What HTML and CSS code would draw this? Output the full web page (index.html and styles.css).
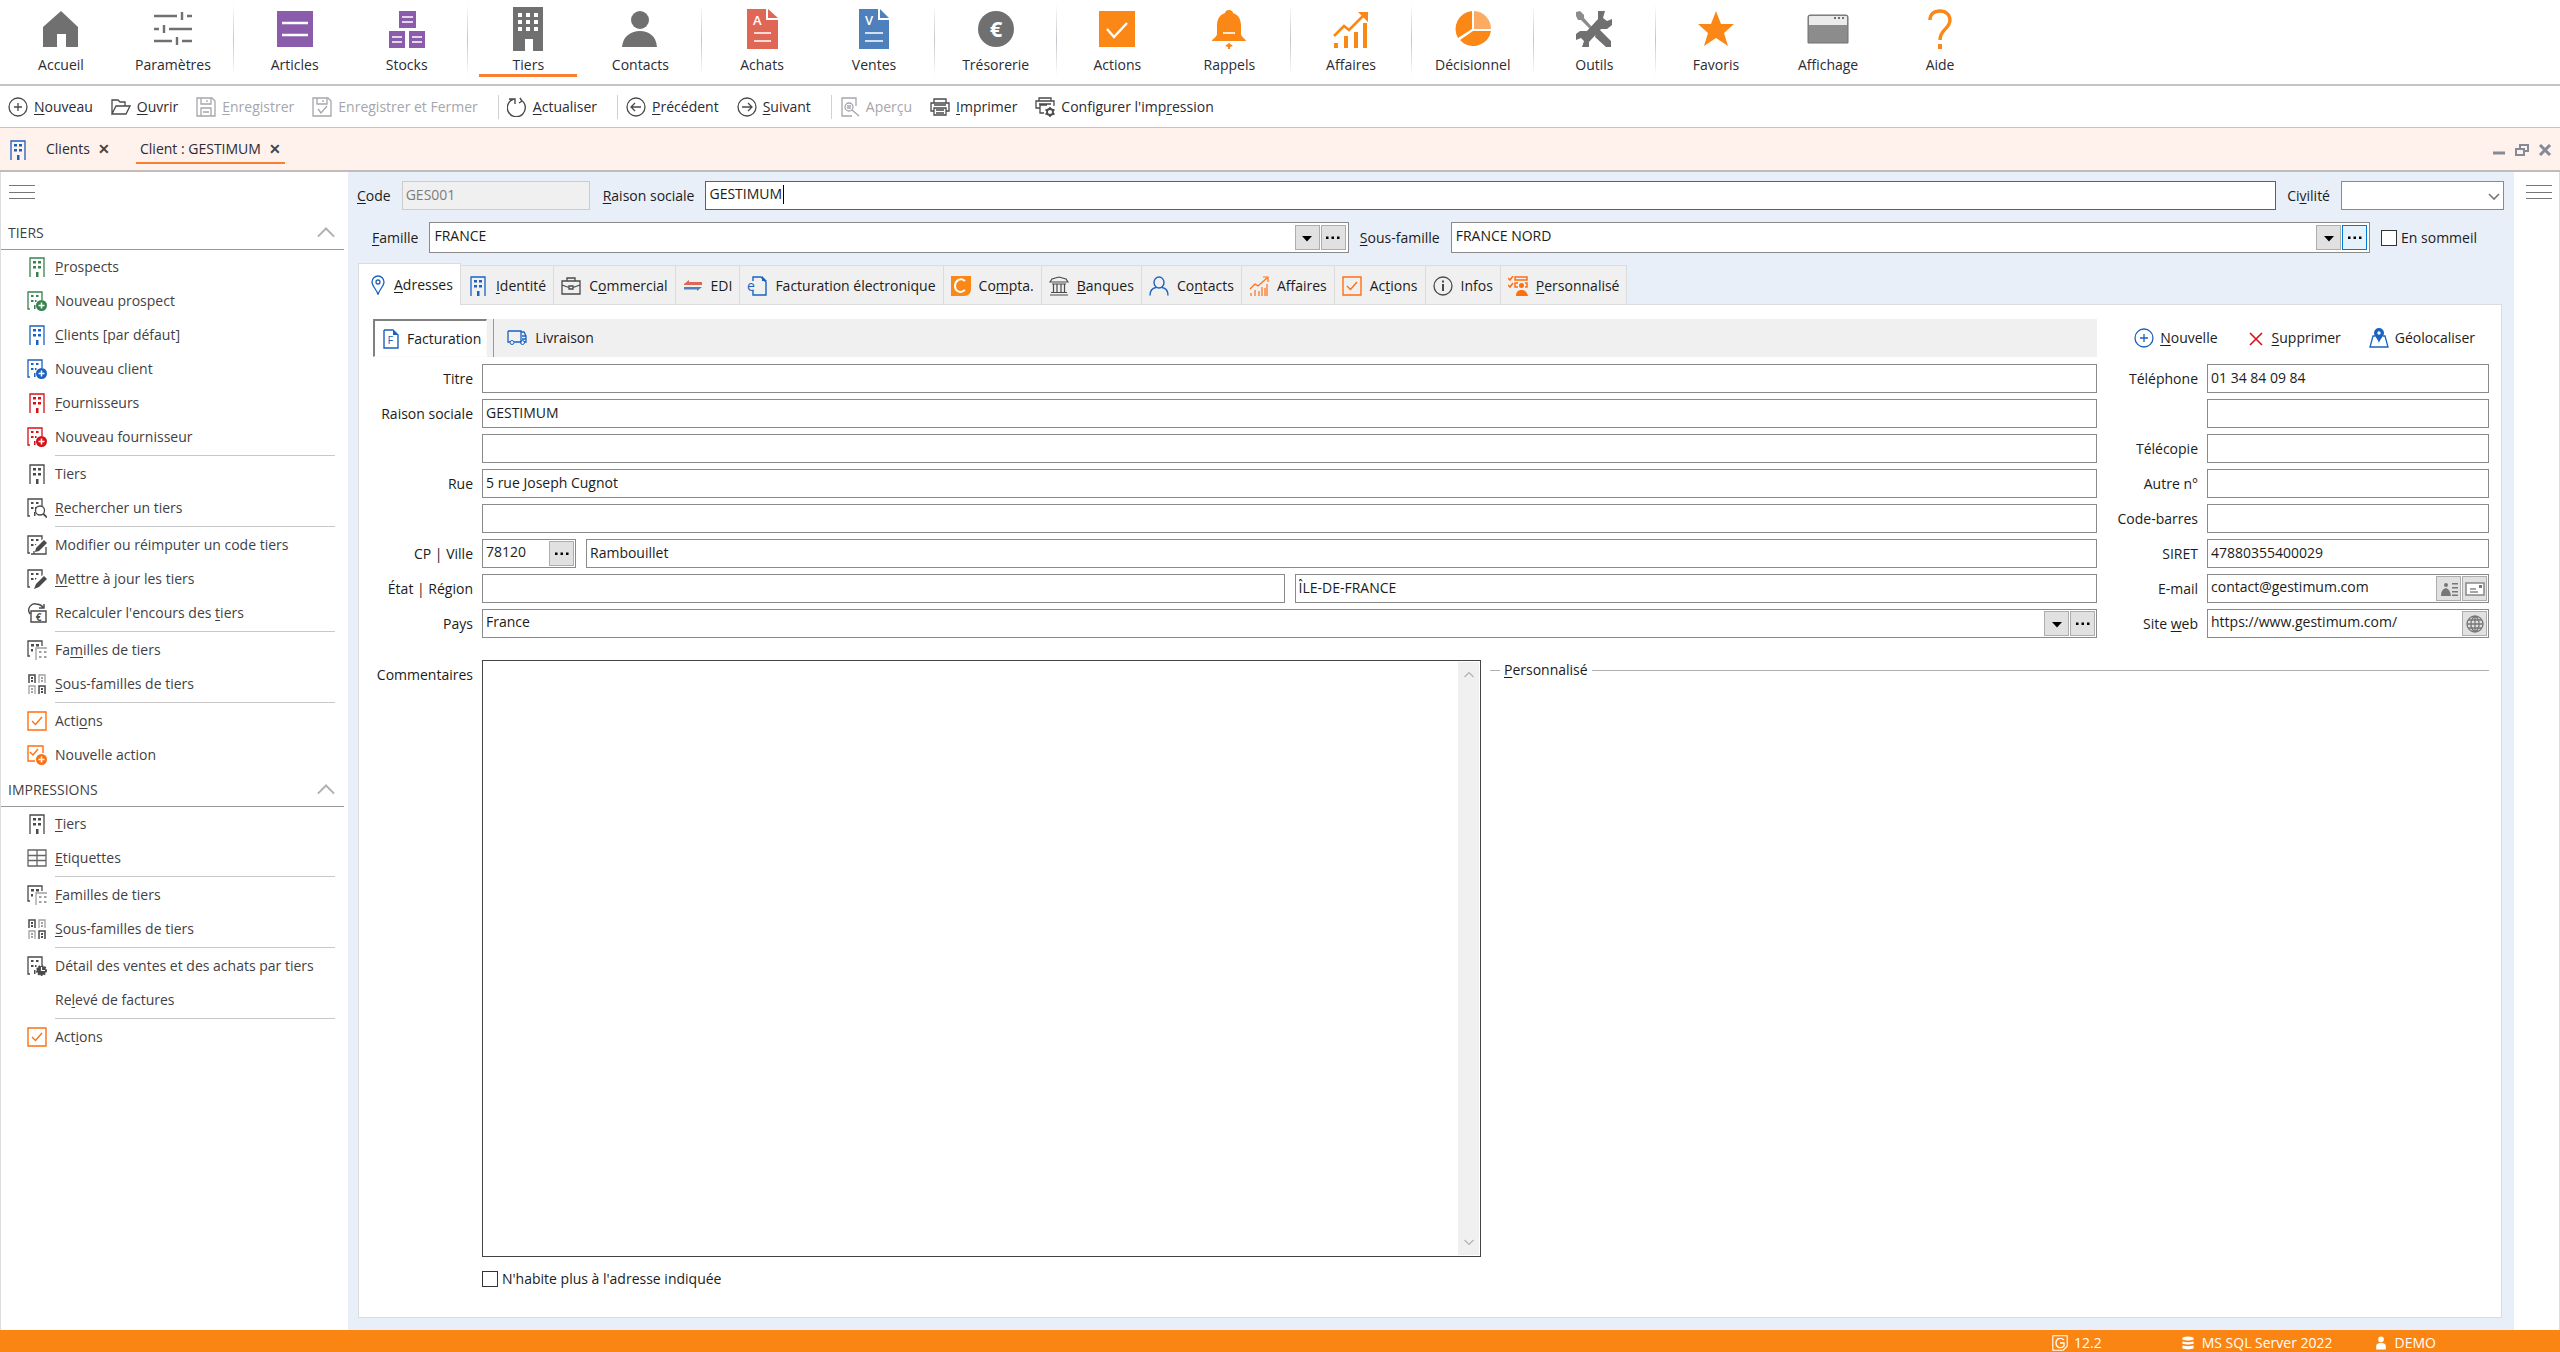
FILE: index.html
```html
<!DOCTYPE html>
<html lang="fr">
<head>
<meta charset="utf-8">
<meta name="viewport" content="width=device-width, initial-scale=1">
<title>Gestimum ERP - Client : GESTIMUM</title>
<link rel="stylesheet" href="styles.css">
</head>
<body>
<svg class="sprite" aria-hidden="true">
  <!-- Ruban principal, grille 44 -->
  <symbol id="n-home" viewBox="0 0 44 44"><path fill="#707070" d="M22 4 39 20V40H27V27H18V40H4V20Z"/></symbol>
  <symbol id="n-param" viewBox="0 0 44 44"><path fill="none" stroke="#707070" stroke-width="2.4" d="M3 9H26M36 9H41M31 5V13M3 22H8M18 22H41M13 18V26M3 34H21M31 34H41M26 30V38"/></symbol>
  <symbol id="n-articles" viewBox="0 0 44 44"><path fill="#8b5bac" d="M4 4H40V40H4Z"/><path stroke="#fff" stroke-width="2.6" d="M9 16H35M9 28H35"/></symbol>
  <symbol id="n-stocks" viewBox="0 0 44 44"><path fill="#8b5bac" d="M14 4H31V21H14ZM4 24H20V41H4ZM24 24H40V41H24Z"/><path stroke="#fff" stroke-width="1.6" d="M17 10H28M17 15H28M7 30H17M7 35H17M27 30H37M27 35H37"/></symbol>
  <symbol id="n-tiers" viewBox="0 0 44 44"><path fill="#707070" d="M7 0H37V44H27V32H19V44H7Z"/><path fill="#fff" d="M12 6h4v4h-4ZM20 6h4v4h-4ZM28 6h4v4h-4ZM12 13h4v4h-4ZM20 13h4v4h-4ZM28 13h4v4h-4ZM12 20h4v4h-4ZM20 20h4v4h-4ZM28 20h4v4h-4Z"/></symbol>
  <symbol id="n-contacts" viewBox="0 0 44 44"><circle cx="22" cy="13" r="9" fill="#707070"/><path fill="#707070" d="M4 40C5 29 13 24 22 24S38 29 39 40Z"/></symbol>
  <symbol id="n-achats" viewBox="0 0 44 44"><path fill="#e06655" d="M7 2H26V13H38V42H7ZM28 2 38 11H28Z"/><path stroke="#fff" stroke-width="1.5" d="M14 26H31M14 34H31"/><text x="13" y="18" fill="#fff" font-size="13" font-weight="600">A</text></symbol>
  <symbol id="n-ventes" viewBox="0 0 44 44"><path fill="#4e80bd" d="M7 2H26V13H37V42H7ZM28 2 37 11H28Z"/><path stroke="#fff" stroke-width="1.5" d="M13 26H31M13 34H31"/><text x="13" y="18" fill="#fff" font-size="13" font-weight="600">V</text></symbol>
  <symbol id="n-euro" viewBox="0 0 44 44"><circle cx="22" cy="22" r="18" fill="#707070"/><text x="22" y="30" text-anchor="middle" fill="#fff" font-size="22" font-weight="700">€</text></symbol>
  <symbol id="n-actions" viewBox="0 0 44 44"><path fill="#fb8716" d="M4 4H40V40H4Z"/><path fill="none" stroke="#fff" stroke-width="2.4" d="M12 22 19 30 32 16"/></symbol>
  <symbol id="n-bell" viewBox="0 0 44 44"><path fill="#fb8716" d="M22 3C25 3 26 5 26 6 32 8 34 13 34 19V27C34 30 39 32 39 34H5C5 32 10 30 10 27V19C10 13 12 8 18 6 18 5 19 3 22 3ZM22 36 26 39 23 40V42H21V40L18 39Z"/><path stroke="#fff" stroke-width="1.6" d="M16 26H28"/></symbol>
  <symbol id="n-affaires" viewBox="0 0 44 44"><path fill="#fb8716" d="M5 36h4v5H5ZM15 29h4v12h-4ZM25 25h4v16h-4ZM34 16h4v25h-4ZM29 5H39V15Z"/><path fill="none" stroke="#fb8716" stroke-width="2.6" d="M5 29 15 19 20 23 35 8"/></symbol>
  <symbol id="n-pie" viewBox="0 0 44 44"><path fill="#fbac62" d="M23 4A18 18 0 0 1 40 22H23Z"/><path fill="#fb8716" d="M21 4V22L7 31A18 18 0 0 1 21 4ZM40 24A18 18 0 0 1 9 33L22 24Z"/></symbol>
  <symbol id="n-outils" viewBox="0 0 44 44"><path fill="#8c8c8c" d="M4 5 8 4 12 8V11L20 20 18 22 9 13H6L4 9Z"/><path fill="#707070" d="M24 26 28 23 39 34V40H34L23 30ZM26 4H33L31 11 35 14 40 12V18L35 22H29L17 35V40H10L12 34 9 31 4 33V27L8 24H15L26 12Z"/></symbol>
  <symbol id="n-star" viewBox="0 0 44 44"><path fill="#fb8716" d="M22 4 27 17H40L30 26 34 39 22 31 10 39 14 26 4 17H17Z"/></symbol>
  <symbol id="n-window" viewBox="0 0 44 44"><path fill="#8c8c8c" stroke="#707070" d="M2 36V10Q2 8 4 8H40Q42 8 42 10V36Z"/><path fill="#ebebeb" d="M3 10Q3 9 4 9H40Q41 9 41 10V18H3Z"/><path fill="#707070" d="M28 10h2v2h-2ZM32 10h2v2h-2ZM36 10h2v2h-2Z"/></symbol>
  <symbol id="n-help" viewBox="0 0 44 44"><path fill="none" stroke="#fb8716" stroke-width="3.4" d="M12 13C12 7 16 4 22 4S32 8 32 13C32 22 22 22 22 33"/><path fill="#fb8716" d="M20 37h4v5h-4Z"/></symbol>

  <!-- Petites icônes, grille 20 -->
  <symbol id="i-plus" viewBox="0 0 20 20"><path fill="none" stroke="currentColor" stroke-width="1.3" d="M10 1A9 9 0 1 1 10 19 9 9 0 1 1 10 1M10 6V14M6 10H14"/></symbol>
  <symbol id="i-prev" viewBox="0 0 20 20"><path fill="none" stroke="currentColor" stroke-width="1.3" d="M10 1A9 9 0 1 1 10 19 9 9 0 1 1 10 1M5 10H15M9 6 5 10 9 14"/></symbol>
  <symbol id="i-next" viewBox="0 0 20 20"><path fill="none" stroke="currentColor" stroke-width="1.3" d="M10 1A9 9 0 1 1 10 19 9 9 0 1 1 10 1M5 10H15M11 6 15 10 11 14"/></symbol>
  <symbol id="i-open" viewBox="0 0 20 20"><path fill="none" stroke="currentColor" stroke-width="1.3" d="M1 17V3H7L9 5H14V9M1 17 5 9H19L15 17Z"/></symbol>
  <symbol id="i-save" viewBox="0 0 20 20"><path fill="none" stroke="currentColor" stroke-width="1.3" d="M1 1H16L19 4V19H1ZM5 1V7H15V1M11 3V5M5 19V11H15V19M7 15H13"/></symbol>
  <symbol id="i-saveclose" viewBox="0 0 20 20"><path fill="none" stroke="currentColor" stroke-width="1.3" d="M1 1H16L19 4V19H1ZM5 1V7H15V1M11 3V5M6 12 9 16 15 9"/></symbol>
  <symbol id="i-refresh" viewBox="0 0 20 20"><path fill="none" stroke="currentColor" stroke-width="1.4" d="M7 2A9 9 0 1 0 14 3M2 2H8V7M13 1 15 4 12 6"/></symbol>
  <symbol id="i-preview" viewBox="0 0 20 20"><path fill="none" stroke="currentColor" stroke-width="1.3" d="M12 19H2V1H16V9M9 6A4 4 0 1 1 9 14 4 4 0 1 1 9 6M12 13 19 19M7 9H11M7 11H11"/></symbol>
  <symbol id="i-print" viewBox="0 0 20 20"><path fill="none" stroke="currentColor" stroke-width="1.3" d="M4 6V2H16V6M4 14H1V6H19V14H16M4 11H16V18H4ZM6 13H14M6 16H14M4 8H16"/></symbol>
  <symbol id="i-printcfg" viewBox="0 0 20 20"><path fill="none" stroke="currentColor" stroke-width="1.3" d="M4 4V1H16V4M5 11H1V4H19V9M4 7H16M9 16H5V8H12"/><circle cx="15" cy="15" r="3" fill="none" stroke="currentColor" stroke-width="1.8"/><path stroke="currentColor" stroke-width="1.6" d="M15 10V12M15 18V20M10.5 12.5 12 13.5M18 16.5 19.5 17.5M10.5 17.5 12 16.5M18 13.5 19.5 12.5"/></symbol>
  <symbol id="i-bld" viewBox="0 0 20 20"><path fill="none" stroke="currentColor" stroke-width="1.3" d="M3 20V1H17V20"/><path fill="currentColor" d="M6 4h3v2.5H6ZM11 4h3v2.5h-3ZM6 9h3v2.5H6ZM11 9h3v2.5h-3ZM9 15h2.5v5H9Z"/></symbol>
  <symbol id="i-bldpart" viewBox="0 0 20 20"><path fill="none" stroke="currentColor" stroke-width="1.3" d="M3 18H1V1H15V9"/><path fill="currentColor" d="M4 4h2.5v2H4ZM9 4h2.5v2H9ZM4 9h2.5v2H4ZM8 9h1.5v2H8ZM7 14h1.5v4H7Z"/></symbol>
  <symbol id="i-bldplus" viewBox="0 0 20 20"><use href="#i-bldpart"/><circle cx="14.5" cy="14.5" r="5.5" fill="currentColor"/><path stroke="#fff" stroke-width="1.5" d="M14.5 11.5V17.5M11.5 14.5H17.5"/></symbol>
  <symbol id="i-bldfind" viewBox="0 0 20 20"><use href="#i-bldpart"/><circle cx="13" cy="12.5" r="4.5" fill="#fff" stroke="currentColor" stroke-width="1.3"/><path stroke="currentColor" stroke-width="1.8" d="M16 15.5 20 19.5"/></symbol>
  <symbol id="i-bldedit" viewBox="0 0 20 20"><use href="#i-bldpart"/><path fill="#fff" d="M6 12 16 4H20V20H5Z"/><path fill="none" stroke="currentColor" stroke-width="1.3" d="M7 16V19H19V12M4 19H7"/><path fill="currentColor" d="M8 17 9 13 17 5 20 8 12 16Z"/></symbol>
  <symbol id="i-bldpen" viewBox="0 0 20 20"><use href="#i-bldpart"/><path fill="#fff" d="M6 12 16 6H20V20H7Z"/><path fill="currentColor" d="M7 20 9 15 17 7 20 10 12 18Z"/></symbol>
  <symbol id="i-recalc" viewBox="0 0 20 20"><path fill="none" stroke="currentColor" stroke-width="1.4" d="M4 8V19H19V8ZM3 11C-1 5 5 0 9 1 12 1 14 2 16 4M17 1V5H12"/><text x="11.5" y="17.5" text-anchor="middle" font-size="10" font-weight="700" fill="currentColor">€</text></symbol>
  <symbol id="i-fam" viewBox="0 0 20 20"><path fill="none" stroke="currentColor" stroke-width="1.3" d="M3 16H1V1H15V6"/><path fill="currentColor" d="M4 4h3v2.5H4ZM9 4h3v2.5H9ZM4 9h2v2.5H4Z"/><path fill="none" stroke="#a0a0a0" stroke-width="1.3" d="M9 20V8H20"/><path fill="#a0a0a0" d="M12 11h2.5v2H12ZM17 11h2.5v2H17ZM12 16h2.5v2H12ZM17 16h2.5v2H17Z"/></symbol>
  <symbol id="i-sfam" viewBox="0 0 20 20"><path fill="none" stroke="currentColor" stroke-width="1.5" d="M2 9V1H8V9M12 20V12H18V20"/><path fill="currentColor" d="M4 3h2v2H4ZM4 6h2v2H4ZM14 14h2v2h-2ZM14 17h2v2h-2Z"/><path fill="none" stroke="#a0a0a0" stroke-width="1.3" d="M12 9V1H18V9M2 20V12H8V20"/><path fill="#a0a0a0" d="M14 3h2v2h-2ZM14 6h2v2h-2ZM4 14h2v2H4ZM4 17h2v2H4Z"/></symbol>
  <symbol id="i-check" viewBox="0 0 20 20"><path fill="none" stroke="currentColor" stroke-width="1.4" d="M1 1H19V19H1ZM5 10 8.5 13.5 15 6"/></symbol>
  <symbol id="i-checkplus" viewBox="0 0 20 20"><path fill="none" stroke="currentColor" stroke-width="1.4" d="M8 16H1V1H16V8M3 7 6 10 11 4"/><circle cx="14.5" cy="14.5" r="5.5" fill="currentColor"/><path stroke="#fff" stroke-width="1.5" d="M14.5 11.5V17.5M11.5 14.5H17.5"/></symbol>
  <symbol id="i-grid" viewBox="0 0 20 20"><path fill="none" stroke="#666" stroke-width="1.3" d="M1 2H19V18H1ZM10 2V18M1 7.5H19M1 12.5H19"/></symbol>
  <symbol id="i-bldclock" viewBox="0 0 20 20"><use href="#i-bldpart"/><circle cx="14.5" cy="14.5" r="4.6" fill="currentColor" stroke="currentColor" stroke-width="1.8" stroke-dasharray="1.8 1.2"/><path fill="none" stroke="#fff" stroke-width="1.2" d="M14.5 11V14.5H18"/></symbol>
  <symbol id="i-pin" viewBox="0 0 20 20"><path fill="none" stroke="currentColor" stroke-width="1.3" d="M10 19.5C9 15 4 11 4 7A6 6 0 0 1 16 7C16 11 11 15 10 19.5Z"/><circle cx="10" cy="7" r="2" fill="none" stroke="currentColor" stroke-width="1.3"/></symbol>
  <symbol id="i-case" viewBox="0 0 20 20"><path fill="none" stroke="currentColor" stroke-width="1.3" d="M1 5H19V18H1ZM6 5V2H14V5M1 9 8 11.500M12 11.500 19 9M8 10H12V13H8Z"/></symbol>
  <symbol id="i-edi" viewBox="0 0 20 20"><path fill="#e06655" d="M1 8 6 4V6H19V9H1Z"/><path fill="#4e80bd" d="M1 11H19L14 15V13.5H1Z"/></symbol>
  <symbol id="i-efact" viewBox="0 0 20 20"><path fill="none" stroke="currentColor" stroke-width="1.4" d="M6 5V1H14L19 6V19H6V15"/><path fill="currentColor" d="M15 0 20 5H15Z"/><text x="0" y="14.5" font-size="14" fill="currentColor">e</text></symbol>
  <symbol id="i-compta" viewBox="0 0 20 20"><path fill="#fb8716" d="M0 0H20V13Q20 20 13 20H0Z"/><path fill="none" stroke="#fff" stroke-width="2" d="M14 5C9 1 4 5 4 10S9 18 14 14"/></symbol>
  <symbol id="i-bank" viewBox="0 0 20 20"><path fill="none" stroke="currentColor" stroke-width="1.2" d="M1 6H19L17 3 10 1 3 3ZM3 8H17M4.5 8V16M8 8V16M12 8V16M15.5 8V16M2 16.5H18M1 19H19"/></symbol>
  <symbol id="i-person" viewBox="0 0 20 20"><path fill="none" stroke="currentColor" stroke-width="1.4" d="M10 1A5 5.5 0 1 1 10 12 5 5.5 0 1 1 10 1M1 19.5C1 14 4 12 7 11.5M19 19.5C19 14 16 12 13 11.5"/></symbol>
  <symbol id="i-chart" viewBox="0 0 20 20"><path fill="none" stroke="currentColor" stroke-width="1.2" d="M1 13 6 8 9 10 18 2M14 1H19V6M2 17V20M6 14V20M10 15V20M13 11V20M16 12V20M18 8V20"/></symbol>
  <symbol id="i-info" viewBox="0 0 20 20"><circle cx="10" cy="10" r="9" fill="none" stroke="currentColor" stroke-width="1.3"/><path stroke="currentColor" stroke-width="2" d="M10 8V15M10 4.5V6.5"/></symbol>
  <symbol id="i-perso" viewBox="0 0 20 20"><path fill="none" stroke="currentColor" stroke-width="1.5" d="M7 1H19V4H7ZM0 2 2 4 5 0M0 9 2 11 5 7M10 11H7V7H10M17 7H19V11H17"/><circle cx="13.5" cy="9.5" r="2.5" fill="currentColor"/><path fill="currentColor" d="M8 20C8 16 10 14 13.5 14S19 16 20 20Z"/></symbol>
  <symbol id="i-fact" viewBox="0 0 20 20"><path fill="none" stroke="currentColor" stroke-width="1.4" d="M3 1H12M17 6V19H3V1"/><path fill="currentColor" d="M12 0 18 6H12Z"/><text x="6.5" y="15" font-size="11" fill="currentColor">F</text></symbol>
  <symbol id="i-truck" viewBox="0 0 20 20"><path fill="none" stroke="currentColor" stroke-width="1.3" d="M1 3H14V14H7M3 14H1V3M14 4H17L19 8V14H17M15 8H19M15 11H19"/><circle cx="5" cy="14.5" r="2" fill="none" stroke="currentColor"/><circle cx="15.5" cy="14.5" r="2" fill="none" stroke="currentColor"/></symbol>
  <symbol id="i-cross" viewBox="0 0 20 20"><path stroke="currentColor" stroke-width="1.6" d="M4 5 16 17M16 5 4 17"/></symbol>
  <symbol id="i-geo" viewBox="0 0 20 20"><path fill="none" stroke="currentColor" stroke-width="1.3" d="M6 8H4L1 19H19L16 8H14"/><path fill="currentColor" d="M10 15C9 11 5 8 5 5A5 5 0 0 1 15 5C15 8 11 11 10 15Z"/><circle cx="10" cy="5" r="1.7" fill="#fff"/></symbol>
  <symbol id="i-card" viewBox="0 0 20 20"><path fill="#777" d="M2 17Q2 10 7 9 11 10 12 17ZM13 4h6v1.5h-6ZM13 8h6v1.5h-6ZM13 12h6v1.5h-6ZM13 15.5h6V17h-6Z"/><circle cx="7" cy="6" r="2" fill="#777"/></symbol>
  <symbol id="i-mail" viewBox="0 0 20 20"><path fill="#fff" stroke="#888" stroke-width="1.5" d="M1 4H19V16H1Z"/><path stroke="#888" stroke-width="1.3" d="M5 10H11M5 13H13"/><path fill="#777" d="M14 6h3v3h-3Z"/></symbol>
  <symbol id="i-globe" viewBox="0 0 20 20"><path fill="none" stroke="#777" stroke-width="1.3" d="M10 2A8 8 0 1 1 10 18 8 8 0 1 1 10 2ZM10 2V18M2 10H18M3.5 6H16.5M3.5 14H16.5M10 2C4.5 6 4.5 14 10 18M10 2C15.5 6 15.5 14 10 18"/></symbol>
  <symbol id="i-down" viewBox="0 0 20 20"><path fill="#000" d="M5 8H15L10 13.5Z"/></symbol>
  <symbol id="i-dots" viewBox="0 0 20 20"><path fill="#000" d="M3 8.5h2.5V11H3ZM8.5 8.5H11V11H8.5ZM14 8.5h2.5V11H14Z"/></symbol>
  <symbol id="i-chevup" viewBox="0 0 20 20"><path fill="none" stroke="#b0b0b0" stroke-width="2.2" d="M1 14 10 5 19 14"/></symbol>
  <symbol id="i-chevdown" viewBox="0 0 20 20"><path fill="none" stroke="#777" stroke-width="1.6" d="M5 8 10 13 15 8"/></symbol>
  <symbol id="i-menu" viewBox="0 0 26 20"><path stroke="#777" d="M0 3.5H26M0 10.5H26M0 16.5H26"/></symbol>
  <symbol id="i-g" viewBox="0 0 20 20"><path fill="none" stroke="#fff" stroke-width="1.4" d="M1 1H19V14L14 19H1Z"/><path fill="none" stroke="#fff" stroke-width="1.6" d="M15 6C10 2 5 5 5 10S10 18 15 14V10H10"/></symbol>
  <symbol id="i-db" viewBox="0 0 20 20"><path fill="#fff" d="M3 4Q3 2 10 2T17 4V6Q10 8 3 6ZM3 8Q10 10 17 8V11Q10 13 3 11ZM3 13Q10 15 17 13V17Q10 19 3 17Z"/></symbol>
  <symbol id="i-user" viewBox="0 0 20 20"><circle cx="10" cy="5.5" r="3.5" fill="#fff"/><path fill="#fff" d="M4 18V14Q4 10 10 10T16 14V18Z"/></symbol>
</svg>

<nav class="ribbon" aria-label="Modules">
  <a class="module" href="#"><svg><use href="#n-home"/></svg>Accueil</a>
  <a class="module" href="#"><svg><use href="#n-param"/></svg>Paramètres</a>
  <span class="rule"></span>
  <a class="module" href="#"><svg><use href="#n-articles"/></svg>Articles</a>
  <a class="module" href="#"><svg><use href="#n-stocks"/></svg>Stocks</a>
  <span class="rule"></span>
  <a class="module is-active" href="#"><svg><use href="#n-tiers"/></svg>Tiers</a>
  <a class="module" href="#"><svg><use href="#n-contacts"/></svg>Contacts</a>
  <span class="rule"></span>
  <a class="module" href="#"><svg><use href="#n-achats"/></svg>Achats</a>
  <a class="module" href="#"><svg><use href="#n-ventes"/></svg>Ventes</a>
  <span class="rule"></span>
  <a class="module" href="#"><svg><use href="#n-euro"/></svg>Trésorerie</a>
  <span class="rule"></span>
  <a class="module" href="#"><svg><use href="#n-actions"/></svg>Actions</a>
  <a class="module" href="#"><svg><use href="#n-bell"/></svg>Rappels</a>
  <span class="rule"></span>
  <a class="module" href="#"><svg><use href="#n-affaires"/></svg>Affaires</a>
  <span class="rule"></span>
  <a class="module" href="#"><svg><use href="#n-pie"/></svg>Décisionnel</a>
  <span class="rule"></span>
  <a class="module" href="#"><svg><use href="#n-outils"/></svg>Outils</a>
  <span class="rule"></span>
  <a class="module" href="#"><svg><use href="#n-star"/></svg>Favoris</a>
  <a class="module" href="#"><svg><use href="#n-window"/></svg>Affichage</a>
  <a class="module" href="#"><svg><use href="#n-help"/></svg>Aide</a>
</nav>

<div class="toolbar">
  <div class="group">
    <button type="button"><svg class="ico"><use href="#i-plus"/></svg><span><u>N</u>ouveau</span></button>
    <button type="button"><svg class="ico"><use href="#i-open"/></svg><span><u>O</u>uvrir</span></button>
    <button type="button" disabled><svg class="ico"><use href="#i-save"/></svg><span><u>E</u>nregistrer</span></button>
    <button type="button" disabled><svg class="ico"><use href="#i-saveclose"/></svg><span>Enregistrer et Fermer</span></button>
  </div>
  <div class="group">
    <button type="button"><svg class="ico"><use href="#i-refresh"/></svg><span><u>A</u>ctualiser</span></button>
  </div>
  <div class="group">
    <button type="button"><svg class="ico"><use href="#i-prev"/></svg><span><u>P</u>récédent</span></button>
    <button type="button"><svg class="ico"><use href="#i-next"/></svg><span><u>S</u>uivant</span></button>
  </div>
  <div class="group">
    <button type="button" disabled><svg class="ico"><use href="#i-preview"/></svg><span>Aperçu</span></button>
    <button type="button"><svg class="ico"><use href="#i-print"/></svg><span><u>I</u>mprimer</span></button>
    <button type="button"><svg class="ico"><use href="#i-printcfg"/></svg><span>Configurer l'imp<u>r</u>ession</span></button>
  </div>
</div>

<div class="docs">
  <svg class="ico blue"><use href="#i-bld"/></svg>
  <div class="doc"><a href="#">Clients</a><button type="button" aria-label="Fermer Clients">✕</button></div>
  <div class="doc is-active"><a href="#">Client : GESTIMUM</a><button type="button" aria-label="Fermer Client">✕</button></div>
  <div class="winbtns">
    <button type="button" aria-label="Réduire"><svg viewBox="0 0 12 12"><path d="M0 9H12" stroke="#858a99" stroke-width="3"/></svg></button>
    <button type="button" aria-label="Restaurer"><svg viewBox="0 0 14 12"><path d="M5 4V1H13V7H10M1 5H9V11H1Z" fill="none" stroke="#858a99" stroke-width="2"/></svg></button>
    <button type="button" aria-label="Fermer"><svg viewBox="0 0 12 12"><path d="M1 1 11 11M11 1 1 11" stroke="#858a99" stroke-width="3"/></svg></button>
  </div>
</div>

<div class="work">
  <aside class="side">
    <button class="burger" type="button" aria-label="Menu"><svg><use href="#i-menu"/></svg></button>
    <h2>TIERS<svg><use href="#i-chevup"/></svg></h2>
    <ul>
      <li><a href="#"><svg class="ico green"><use href="#i-bld"/></svg><span><u>P</u>rospects</span></a></li>
      <li><a href="#"><svg class="ico green"><use href="#i-bldplus"/></svg><span>Nouveau prospect</span></a></li>
      <li><a href="#"><svg class="ico blue"><use href="#i-bld"/></svg><span><u>C</u>lients [par défaut]</span></a></li>
      <li><a href="#"><svg class="ico blue"><use href="#i-bldplus"/></svg><span>Nouveau client</span></a></li>
      <li><a href="#"><svg class="ico red"><use href="#i-bld"/></svg><span><u>F</u>ournisseurs</span></a></li>
      <li><a href="#"><svg class="ico red"><use href="#i-bldplus"/></svg><span>Nouveau fournisseur</span></a></li>
      <li class="cut"><a href="#"><svg class="ico"><use href="#i-bld"/></svg><span>Tiers</span></a></li>
      <li><a href="#"><svg class="ico"><use href="#i-bldfind"/></svg><span><u>R</u>echercher un tiers</span></a></li>
      <li class="cut"><a href="#"><svg class="ico"><use href="#i-bldedit"/></svg><span>Modifier ou réimputer un code tiers</span></a></li>
      <li><a href="#"><svg class="ico"><use href="#i-bldpen"/></svg><span><u>M</u>ettre à jour les tiers</span></a></li>
      <li><a href="#"><svg class="ico"><use href="#i-recalc"/></svg><span>Recalculer l'encours des <u>t</u>iers</span></a></li>
      <li class="cut"><a href="#"><svg class="ico"><use href="#i-fam"/></svg><span>Fa<u>m</u>illes de tiers</span></a></li>
      <li><a href="#"><svg class="ico"><use href="#i-sfam"/></svg><span><u>S</u>ous-familles de tiers</span></a></li>
      <li class="cut"><a href="#"><svg class="ico orange"><use href="#i-check"/></svg><span>Acti<u>o</u>ns</span></a></li>
      <li><a href="#"><svg class="ico orange"><use href="#i-checkplus"/></svg><span>Nouvelle action</span></a></li>
    </ul>
    <h2>IMPRESSIONS<svg><use href="#i-chevup"/></svg></h2>
    <ul>
      <li><a href="#"><svg class="ico"><use href="#i-bld"/></svg><span><u>T</u>iers</span></a></li>
      <li><a href="#"><svg class="ico"><use href="#i-grid"/></svg><span><u>E</u>tiquettes</span></a></li>
      <li class="cut"><a href="#"><svg class="ico"><use href="#i-fam"/></svg><span><u>F</u>amilles de tiers</span></a></li>
      <li><a href="#"><svg class="ico"><use href="#i-sfam"/></svg><span><u>S</u>ous-familles de tiers</span></a></li>
      <li class="cut"><a href="#"><svg class="ico"><use href="#i-bldclock"/></svg><span>Détail des ventes et des achats par tiers</span></a></li>
      <li><a href="#"><span class="ico"></span><span>Re<u>l</u>evé de factures</span></a></li>
      <li class="cut"><a href="#"><svg class="ico orange"><use href="#i-check"/></svg><span>Act<u>i</u>ons</span></a></li>
    </ul>
  </aside>

  <main class="form">
    <div class="row row-id">
      <label for="code"><u>C</u>ode</label>
      <input class="field code" id="code" value="GES001" disabled>
      <label for="raison"><u>R</u>aison sociale</label>
      <div class="field combo focus grow"><input class="fit" id="raison" value="GESTIMUM"><span class="caret"></span></div>
      <label for="civ">Ci<u>v</u>ilité</label>
      <div class="select"><select class="field" id="civ"><option></option><option>M.</option><option>Mme</option></select><svg class="ico"><use href="#i-chevdown"/></svg></div>
    </div>
    <div class="row row-fam">
      <label for="fam"><u>F</u>amille</label>
      <div class="field combo tall grow"><input id="fam" value="FRANCE"><button type="button" aria-label="Liste des familles"><svg class="ico"><use href="#i-down"/></svg></button><button type="button" aria-label="Choisir la famille"><svg class="ico"><use href="#i-dots"/></svg></button></div>
      <label for="sfam"><u>S</u>ous-famille</label>
      <div class="field combo tall grow"><input id="sfam" value="FRANCE NORD"><button type="button" aria-label="Liste des sous-familles"><svg class="ico"><use href="#i-down"/></svg></button><button class="hot" type="button" aria-label="Choisir la sous-famille"><svg class="ico"><use href="#i-dots"/></svg></button></div>
      <label class="check"><input type="checkbox">En sommeil</label>
    </div>

    <div class="tabs" role="tablist">
      <button class="tab is-active" type="button" role="tab" aria-selected="true"><svg class="ico blue"><use href="#i-pin"/></svg><span><u>A</u>dresses</span></button>
      <button class="tab" type="button" role="tab"><svg class="ico blue"><use href="#i-bld"/></svg><span><u>I</u>dentité</span></button>
      <button class="tab" type="button" role="tab"><svg class="ico"><use href="#i-case"/></svg><span>C<u>o</u>mmercial</span></button>
      <button class="tab" type="button" role="tab"><svg class="ico"><use href="#i-edi"/></svg><span>EDI</span></button>
      <button class="tab" type="button" role="tab"><svg class="ico blue"><use href="#i-efact"/></svg><span>Facturation électronique</span></button>
      <button class="tab" type="button" role="tab"><svg class="ico"><use href="#i-compta"/></svg><span>Co<u>m</u>pta.</span></button>
      <button class="tab" type="button" role="tab"><svg class="ico"><use href="#i-bank"/></svg><span><u>B</u>anques</span></button>
      <button class="tab" type="button" role="tab"><svg class="ico blue"><use href="#i-person"/></svg><span>Co<u>n</u>tacts</span></button>
      <button class="tab" type="button" role="tab"><svg class="ico orange"><use href="#i-chart"/></svg><span>Affaires</span></button>
      <button class="tab" type="button" role="tab"><svg class="ico orange"><use href="#i-check"/></svg><span>Ac<u>t</u>ions</span></button>
      <button class="tab" type="button" role="tab"><svg class="ico"><use href="#i-info"/></svg><span>Infos</span></button>
      <button class="tab" type="button" role="tab"><svg class="ico orange"><use href="#i-perso"/></svg><span><u>P</u>ersonnalisé</span></button>
    </div>

    <section class="panel">
      <div class="head">
        <div class="subtabs">
          <button class="sub is-active" type="button"><svg class="ico blue"><use href="#i-fact"/></svg><span>Facturation</span></button>
          <button class="sub" type="button"><svg class="ico blue"><use href="#i-truck"/></svg><span>Livraison</span></button>
        </div>
        <div class="cmds">
          <button type="button"><svg class="ico blue"><use href="#i-plus"/></svg><span><u>N</u>ouvelle</span></button>
          <button type="button"><svg class="ico red"><use href="#i-cross"/></svg><span><u>S</u>upprimer</span></button>
          <button type="button"><svg class="ico blue"><use href="#i-geo"/></svg><span>Géolocaliser</span></button>
        </div>
      </div>

      <div class="cols">
        <div class="grid">
          <label for="titre">Titre</label><input class="field" id="titre">
          <label for="rs1">Raison sociale</label><input class="field" id="rs1" value="GESTIMUM">
          <span></span><input class="field" aria-label="Raison sociale, suite">
          <label for="rue">Rue</label><input class="field" id="rue" value="5 rue Joseph Cugnot">
          <span></span><input class="field" aria-label="Rue, suite">
          <label for="cp">CP | Ville</label>
          <div class="pair"><div class="field combo cp"><input id="cp" value="78120"><button type="button" aria-label="Choisir le code postal"><svg class="ico"><use href="#i-dots"/></svg></button></div><input class="field grow" aria-label="Ville" value="Rambouillet"></div>
          <label for="etat">État | Région</label>
          <div class="pair"><input class="field grow" id="etat"><input class="field grow" aria-label="Région" value="ÎLE-DE-FRANCE"></div>
          <label for="pays">Pays</label>
          <div class="field combo"><input id="pays" value="France"><button type="button" aria-label="Liste des pays"><svg class="ico"><use href="#i-down"/></svg></button><button type="button" aria-label="Choisir le pays"><svg class="ico"><use href="#i-dots"/></svg></button></div>
        </div>
        <div class="grid grid-tel">
          <label for="tel">Téléphone</label><input class="field" id="tel" value="01 34 84 09 84">
          <span></span><input class="field" aria-label="Téléphone 2">
          <label for="fax">Télécopie</label><input class="field" id="fax">
          <label for="autre">Autre n°</label><input class="field" id="autre">
          <label for="cb">Code-barres</label><input class="field" id="cb">
          <label for="siret">SIRET</label><input class="field" id="siret" value="47880355400029">
          <label for="mail">E-mail</label>
          <div class="field combo"><input id="mail" value="contact@gestimum.com"><button type="button" aria-label="Contact"><svg class="ico"><use href="#i-card"/></svg></button><button type="button" aria-label="Envoyer un e-mail"><svg class="ico"><use href="#i-mail"/></svg></button></div>
          <label for="web">Site <u>w</u>eb</label>
          <div class="field combo"><input id="web" value="https://www.gestimum.com/"><button type="button" aria-label="Ouvrir le site"><svg class="ico"><use href="#i-globe"/></svg></button></div>
        </div>
      </div>

      <div class="notes">
        <label for="com">Commentaires</label>
        <div class="memo"><textarea id="com"></textarea><div class="bar"><svg><use href="#i-chevup"/></svg><svg class="flip"><use href="#i-chevup"/></svg></div></div>
        <div class="legend"><span><u>P</u>ersonnalisé</span></div>
        <label class="check moved"><input type="checkbox">N'habite plus à l'adresse indiquée</label>
      </div>
    </section>
  </main>

  <aside class="right"><button class="burger" type="button" aria-label="Menu"><svg><use href="#i-menu"/></svg></button></aside>
</div>

<footer class="status">
  <span class="ver"><svg><use href="#i-g"/></svg>12.2</span>
  <span class="sql"><svg><use href="#i-db"/></svg>MS SQL Server 2022</span>
  <span class="usr"><svg><use href="#i-user"/></svg>DEMO</span>
</footer>
</body>
</html>
```
FILE: styles.css
```css
* { box-sizing: border-box; }

body {
  margin: 0;
  min-height: 100vh;
  display: flex;
  flex-direction: column;
  background: #fff;
  color: #2b2b33;
  font: 14px/20px "Open Sans", "Noto Sans", sans-serif;
}

a { color: inherit; text-decoration: none; }
u { text-underline-offset: 2px; }
button, input, select, textarea { font: inherit; color: inherit; margin: 0; }
button { padding: 0; border: 0; background: none; white-space: nowrap; }

.sprite { display: none; }
.ico { width: 20px; height: 20px; flex: none; color: #4a4a4a; }
.blue { color: #1a62c0; }
.green { color: #38834d; }
.red { color: #d80f14; }
.orange { color: #ff6f0f; }

/* Ruban des modules */
.ribbon {
  display: flex;
  height: 86px;
  padding: 0 564px 0 5px;
  border-bottom: 2px solid #c4c4c4;
}
.module {
  width: 112px;
  display: flex;
  flex-direction: column;
  align-items: center;
  gap: 4px;
  padding-top: 7px;
}
.module svg { width: 44px; height: 44px; }
.module.is-active {
  background: linear-gradient(#fb7f32, #fb7f32) 50% 74px / 98px 3px no-repeat;
}
.rule {
  flex: 1;
  margin: 4px 0 8px;
  background: linear-gradient(transparent, #c4c4cc, transparent) 50% 0 / 1px 100% no-repeat;
}

/* Barre de commandes */
.toolbar {
  display: flex;
  align-items: center;
  gap: 20px;
  height: 42px;
  padding-left: 8px;
  border-bottom: 1px solid #c4c4c4;
}
.group { display: flex; gap: 18px; height: 24px; }
.group + .group { border-left: 1px solid #d0d0d4; padding-left: 8px; }
.group button { display: flex; align-items: center; gap: 6px; }
.group button:disabled, .group button:disabled .ico { color: #a6a6ac; }

/* Documents ouverts */
.docs {
  display: flex;
  align-items: center;
  height: 44px;
  padding: 2px 0 0 8px;
  background: #fff1ec;
  border-bottom: 2px solid #c0bcbc;
}
.doc {
  display: flex;
  gap: 8px;
  margin-left: 14px;
  padding: 0 4px;
  height: 28px;
  align-items: center;
  border-bottom: 2px solid transparent;
}
.doc + .doc { margin-left: 22px; }
.doc button { color: #444; font-weight: 700; }
.doc.is-active { border-bottom-color: #fb7f32; }
.winbtns { display: flex; gap: 9px; margin-left: auto; padding-right: 8px; }
.winbtns button { display: flex; }
.winbtns svg { width: 14px; height: 12px; }

/* Zone de travail */
.work { flex: 1; display: flex; }
.side { width: 348px; padding-right: 4px; border-left: 1px solid #ddd; color: #3f3f46; }
.burger { display: block; }
.burger svg { display: block; width: 26px; height: 20px; }
.side .burger { margin: 10px 0 0 8px; }
.side h2 {
  display: flex;
  align-items: center;
  justify-content: space-between;
  height: 34px;
  margin: 0;
  padding: 0 9px 0 7px;
  font-size: 14px;
  font-weight: 400;
  border-bottom: 1px solid #999;
}
.side h2 svg { width: 18px; height: 18px; }
.side .burger + h2 { margin-top: 14px; }
.side ul { list-style: none; margin: 0 0 1px; padding: 0 9px 0 26px; }
.side a { display: flex; align-items: center; gap: 8px; height: 34px; }
.side .cut {
  padding-top: 3px;
  background: linear-gradient(#c8c8c8, #c8c8c8) 28px 1px / 100% 1px no-repeat;
}
.right { width: 46px; padding: 10px 8px 0 12px; border-right: 1px solid #ddd; }

/* Fiche client */
.form {
  flex: 1;
  min-width: 0;
  display: flex;
  flex-direction: column;
  padding: 9px 9px 12px;
  background: #e8eff9;
  color: #1b1b20;
}
.row { display: flex; align-items: center; gap: 11px; }
.row-id { padding-right: 1px; }
.row-fam { margin-top: 12px; padding: 0 28px 0 15px; }
.grow { flex: 1 1 0; }
.field {
  min-width: 0;
  height: 29px;
  padding: 0 3px 3px;
  background: #fff;
  border: 1px solid #8a8a8a;
  border-radius: 0;
}
.field:disabled { background: #f0f0f0; border-color: #ccc; color: #7d7d7d; }
.code { width: 188px; margin-right: 2px; }
.combo { display: flex; padding: 1px; gap: 1px; }
.combo.tall { height: 31px; padding: 2px; }
.combo.focus { border-color: #0078d7; }
.combo input {
  flex: 1;
  min-width: 0;
  padding: 0 2px 3px;
  border: 0;
  outline: 0;
  background: none;
}
.combo .fit { flex: none; field-sizing: content; padding-right: 0; }
.caret { width: 1px; height: 19px; margin-top: 2px; background: #000; }
.combo button {
  width: 25px;
  display: flex;
  align-items: center;
  justify-content: center;
  background: #e1e1e1;
  border: 1px solid #adadad;
}
.combo .hot { background: #e5f1fb; border-color: #0078d7; }
.select { display: grid; width: 163px; align-items: center; }
.select > * { grid-area: 1 / 1; }
.select select { width: 100%; appearance: none; }
.select .ico { justify-self: end; pointer-events: none; }
.check { display: flex; align-items: center; gap: 4px; }
.check input {
  appearance: none;
  width: 16px;
  height: 16px;
  background: #fff;
  border: 1px solid #333;
}

.tabs { display: flex; align-items: flex-end; margin-top: 10px; padding-left: 1px; }
.tab {
  display: flex;
  align-items: center;
  gap: 8px;
  height: 39px;
  padding: 2px 7px 0;
  background: #f0f0f0;
  border: 1px solid #dcdcdc;
  border-width: 1px 1px 0 0;
}
.tab.is-active {
  height: 42px;
  gap: 6px;
  padding: 0 7px 0 9px;
  border-left-width: 1px;
  background: #fff;
  margin-bottom: -1px;
  position: relative;
}

.panel {
  flex: 1;
  display: flex;
  flex-direction: column;
  margin: 0 3px 0 1px;
  padding: 14px 12px 28px 14px;
  background: #fff;
  border: 1px solid #dcdcdc;
}
.head, .cols { display: grid; grid-template-columns: 1fr 392px; }
.subtabs { display: flex; height: 38px; background: #f0f0f0; }
.sub { display: flex; align-items: center; gap: 8px; padding: 0 13px; }
.sub.is-active {
  gap: 6px;
  margin-right: 6px;
  padding: 0 5px 0 6px;
  background: #fff;
  border: 1px solid #fafafa;
  border-width: 2px 1px 1px 2px;
  border-top-color: #808080;
  border-left-color: #808080;
}
.sub + .sub { border-left: 1px solid #999; }
.cmds { display: flex; align-items: center; justify-content: flex-end; gap: 28px; padding-right: 14px; }
.cmds button { display: flex; align-items: center; gap: 6px; }
.cols { margin-top: 7px; }
.grid { display: grid; grid-template-columns: 100px 1fr; gap: 6px 9px; align-items: center; }
.grid > label, .notes > label:first-child { text-align: right; }
.grid-tel { grid-template-columns: 101px 1fr; }
.pair { display: flex; gap: 10px; }
.cp { width: 94px; }

.notes {
  flex: 1;
  display: grid;
  grid-template: 1fr auto / 100px 1fr 1fr;
  gap: 12px 9px;
  margin-top: 22px;
}
.notes > label:first-child { padding-top: 5px; }
.memo { display: flex; border: 1px solid #444; padding: 1px; }
.memo textarea { flex: 1; border: 0; padding: 2px; resize: none; outline: 0; }
.bar {
  display: flex;
  flex-direction: column;
  justify-content: space-between;
  align-items: center;
  width: 21px;
  padding: 8px 0;
  background: #f0f0f0;
}
.bar svg { width: 10px; height: 10px; }
.flip { transform: rotate(180deg); }
.legend { display: flex; align-items: center; gap: 4px; height: 20px; }
.legend::before, .legend::after { content: ""; height: 1px; width: 10px; background: #b0b0b0; }
.legend::after { flex: 1; }
.moved { grid-column: 2; }

.status {
  display: flex;
  justify-content: flex-end;
  align-items: center;
  height: 22px;
  padding: 4px 124px 0 0;
  background: #fb8513;
  color: #fff;
}
.status span { display: flex; align-items: center; gap: 6px; }
.status svg { width: 16px; height: 16px; }
.sql { margin-left: 78px; }
.usr { margin-left: 40px; }
```
